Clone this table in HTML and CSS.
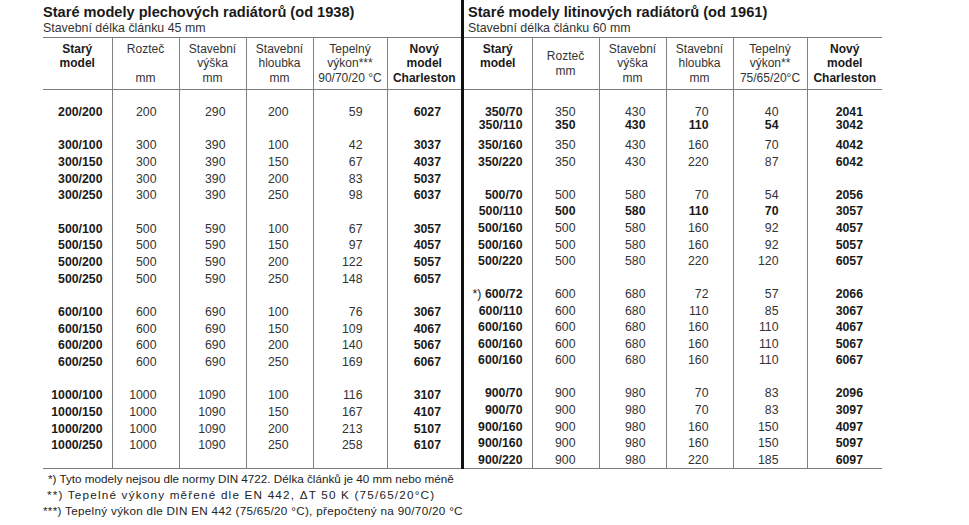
FILE: index.html
```html
<!DOCTYPE html>
<html lang="cs">
<head>
<meta charset="utf-8">
<title>Staré modely radiátorů</title>
<link rel="stylesheet" href="styles.css">
</head>
<body>
<div class="page">
  <div class="panels">
    <section class="panel panel-left">
      <h1 class="title">Staré modely plechových radiátorů (od 1938)</h1>
      <p class="subtitle">Stavební délka článku 45 mm</p>
      <table class="grid grid-left">
        <colgroup><col><col><col><col><col><col></colgroup>
        <thead>
          <tr>
            <th class="b">Starý<br>model</th>
            <th>Rozteč<br>&nbsp;<br>mm</th>
            <th>Stavební<br>výška<br>mm</th>
            <th>Stavební<br>hloubka<br>mm</th>
            <th>Tepelný<br>výkon***<br>90/70/20 °C</th>
            <th class="b">Nový<br>model<br>Charleston</th>
          </tr>
        </thead>
        <tbody>
          <tr class="pad"><td></td><td></td><td></td><td></td><td></td><td></td></tr>
          <tr><td>200/200</td><td>200</td><td>290</td><td>200</td><td>59</td><td>6027</td></tr>
          <tr><td></td><td></td><td></td><td></td><td></td><td></td></tr>
          <tr><td>300/100</td><td>300</td><td>390</td><td>100</td><td>42</td><td>3037</td></tr>
          <tr><td>300/150</td><td>300</td><td>390</td><td>150</td><td>67</td><td>4037</td></tr>
          <tr><td>300/200</td><td>300</td><td>390</td><td>200</td><td>83</td><td>5037</td></tr>
          <tr><td>300/250</td><td>300</td><td>390</td><td>250</td><td>98</td><td>6037</td></tr>
          <tr><td></td><td></td><td></td><td></td><td></td><td></td></tr>
          <tr><td>500/100</td><td>500</td><td>590</td><td>100</td><td>67</td><td>3057</td></tr>
          <tr><td>500/150</td><td>500</td><td>590</td><td>150</td><td>97</td><td>4057</td></tr>
          <tr><td>500/200</td><td>500</td><td>590</td><td>200</td><td>122</td><td>5057</td></tr>
          <tr><td>500/250</td><td>500</td><td>590</td><td>250</td><td>148</td><td>6057</td></tr>
          <tr><td></td><td></td><td></td><td></td><td></td><td></td></tr>
          <tr><td>600/100</td><td>600</td><td>690</td><td>100</td><td>76</td><td>3067</td></tr>
          <tr><td>600/150</td><td>600</td><td>690</td><td>150</td><td>109</td><td>4067</td></tr>
          <tr><td>600/200</td><td>600</td><td>690</td><td>200</td><td>140</td><td>5067</td></tr>
          <tr><td>600/250</td><td>600</td><td>690</td><td>250</td><td>169</td><td>6067</td></tr>
          <tr><td></td><td></td><td></td><td></td><td></td><td></td></tr>
          <tr><td>1000/100</td><td>1000</td><td>1090</td><td>100</td><td>116</td><td>3107</td></tr>
          <tr><td>1000/150</td><td>1000</td><td>1090</td><td>150</td><td>167</td><td>4107</td></tr>
          <tr><td>1000/200</td><td>1000</td><td>1090</td><td>200</td><td>213</td><td>5107</td></tr>
          <tr><td>1000/250</td><td>1000</td><td>1090</td><td>250</td><td>258</td><td>6107</td></tr>
          <tr class="pad"><td></td><td></td><td></td><td></td><td></td><td></td></tr>
        </tbody>
      </table>
    </section>
    <section class="panel panel-right">
      <h1 class="title">Staré modely litinových radiátorů (od 1961)</h1>
      <p class="subtitle">Stavební délka článku 60 mm</p>
      <table class="grid grid-right">
        <colgroup><col><col><col><col><col><col></colgroup>
        <thead>
          <tr>
            <th class="b">Starý<br>model</th>
            <th class="mid">Rozteč<br>mm</th>
            <th>Stavební<br>výška<br>mm</th>
            <th>Stavební<br>hloubka<br>mm</th>
            <th>Tepelný<br>výkon**<br>75/65/20°C</th>
            <th class="b">Nový<br>model<br>Charleston</th>
          </tr>
        </thead>
        <tbody>
          <tr class="pad"><td></td><td></td><td></td><td></td><td></td><td></td></tr>
          <tr class="pair">
            <td><span class="ln">350/70</span><span class="ln">350/110</span></td>
            <td><span class="ln">350</span><span class="ln strong">350</span></td>
            <td><span class="ln">430</span><span class="ln strong">430</span></td>
            <td><span class="ln">70</span><span class="ln strong">110</span></td>
            <td><span class="ln">40</span><span class="ln strong">54</span></td>
            <td><span class="ln">2041</span><span class="ln">3042</span></td>
          </tr>
          <tr><td>350/160</td><td>350</td><td>430</td><td>160</td><td>70</td><td>4042</td></tr>
          <tr><td>350/220</td><td>350</td><td>430</td><td>220</td><td>87</td><td>6042</td></tr>
          <tr><td></td><td></td><td></td><td></td><td></td><td></td></tr>
          <tr><td>500/70</td><td>500</td><td>580</td><td>70</td><td>54</td><td>2056</td></tr>
          <tr class="strong"><td>500/110</td><td>500</td><td>580</td><td>110</td><td>70</td><td>3057</td></tr>
          <tr><td>500/160</td><td>500</td><td>580</td><td>160</td><td>92</td><td>4057</td></tr>
          <tr><td>500/160</td><td>500</td><td>580</td><td>160</td><td>92</td><td>5057</td></tr>
          <tr><td>500/220</td><td>500</td><td>580</td><td>220</td><td>120</td><td>6057</td></tr>
          <tr><td></td><td></td><td></td><td></td><td></td><td></td></tr>
          <tr><td><span class="mark">*)</span> 600/72</td><td>600</td><td>680</td><td>72</td><td>57</td><td>2066</td></tr>
          <tr><td>600/110</td><td>600</td><td>680</td><td>110</td><td>85</td><td>3067</td></tr>
          <tr><td>600/160</td><td>600</td><td>680</td><td>160</td><td>110</td><td>4067</td></tr>
          <tr><td>600/160</td><td>600</td><td>680</td><td>160</td><td>110</td><td>5067</td></tr>
          <tr><td>600/160</td><td>600</td><td>680</td><td>160</td><td>110</td><td>6067</td></tr>
          <tr><td></td><td></td><td></td><td></td><td></td><td></td></tr>
          <tr><td>900/70</td><td>900</td><td>980</td><td>70</td><td>83</td><td>2096</td></tr>
          <tr><td>900/70</td><td>900</td><td>980</td><td>70</td><td>83</td><td>3097</td></tr>
          <tr><td>900/160</td><td>900</td><td>980</td><td>160</td><td>150</td><td>4097</td></tr>
          <tr><td>900/160</td><td>900</td><td>980</td><td>160</td><td>150</td><td>5097</td></tr>
          <tr><td>900/220</td><td>900</td><td>980</td><td>220</td><td>185</td><td>6097</td></tr>
        </tbody>
      </table>
    </section>
  </div>
  <div class="notes">
    <p class="note note-1">*) Tyto modely nejsou dle normy DIN 4722. Délka článků je 40 mm nebo méně</p>
    <p class="note note-2">**) Tepelné výkony měřené dle EN 442, ΔT 50 K (75/65/20°C)</p>
    <p class="note note-3">***) Tepelný výkon dle DIN EN 442 (75/65/20 °C), přepočtený na 90/70/20 °C</p>
  </div>
</div>
</body>
</html>
```

FILE: styles.css
```css
* { box-sizing: border-box; }
html, body { margin: 0; padding: 0; background: #fff; }
body {
  font-family: "Liberation Sans", Arial, Helvetica, sans-serif;
  color: #222;
}
.page {
  width: 969px;
  height: 525px;
  padding-left: 43px;
  overflow: hidden;
}
.panels { display: flex; align-items: stretch; }
.panel-left { width: 418px; }
.panel-right { width: 421px; border-left: 3px solid #111; }
.panel-right .title,
.panel-right .subtitle { padding-left: 4px; }

.title {
  margin: 4px 0 0;
  font-size: 14.6px;
  line-height: 17px;
  font-weight: bold;
  color: #1a1a1a;
  white-space: nowrap;
}
.subtitle {
  margin: 0 0 2px;
  font-size: 12.4px;
  line-height: 14px;
  color: #333;
  white-space: nowrap;
}

.grid {
  width: 418px;
  border-collapse: collapse;
  table-layout: fixed;
  border-top: 1px solid #7a7a7a;
  border-bottom: 1px solid #7a7a7a;
  font-size: 12.3px;
}
.grid thead tr { border-bottom: 1px solid #7a7a7a; }
.grid th {
  font-weight: normal;
  font-size: 12px;
  line-height: 14.5px;
  padding: 3.75px 0;
  vertical-align: top;
  text-align: center;
  color: #333;
  white-space: nowrap;
}
.grid th.b { font-weight: bold; color: #1a1a1a; }
.grid th.mid { vertical-align: middle; }
.grid th + th,
.grid td + td { border-left: 1px solid #808080; }

.grid td {
  height: 16.65px;
  line-height: 16.65px;
  padding: 0;
  text-align: right;
  color: #333;
  white-space: nowrap;
  vertical-align: top;
}
.grid td:first-child,
.grid td:last-child { font-weight: bold; color: #1a1a1a; }
.grid tr.pad td { height: 14.7px; line-height: 14.7px; }
.grid tr.strong td { font-weight: bold; color: #1a1a1a; }
.grid .strong { font-weight: bold; color: #1a1a1a; }
.grid .mark { font-weight: normal; }

.grid-right td { height: 16.55px; line-height: 16.55px; }
.grid-right tr.pair td { height: 33.1px; line-height: 12.7px; padding-top: 1.95px; }
.grid-right .ln { display: block; }

.grid-left col:nth-child(1) { width: 69px; }
.grid-left col:nth-child(2) { width: 67px; }
.grid-left col:nth-child(3) { width: 67px; }
.grid-left col:nth-child(4) { width: 67px; }
.grid-left col:nth-child(5) { width: 74px; }
.grid-left col:nth-child(6) { width: 74px; }

.grid-right col:nth-child(1) { width: 68px; }
.grid-right col:nth-child(2) { width: 67px; }
.grid-right col:nth-child(3) { width: 67px; }
.grid-right col:nth-child(4) { width: 67px; }
.grid-right col:nth-child(5) { width: 74px; }
.grid-right col:nth-child(6) { width: 75px; }

.grid-left td:nth-child(1) { padding-right: 9px; }
.grid-left td:nth-child(2) { padding-right: 22px; }
.grid-left td:nth-child(3) { padding-right: 20px; }
.grid-left td:nth-child(4) { padding-right: 24px; }
.grid-left td:nth-child(5) { padding-right: 24px; }
.grid-left td:nth-child(6) { padding-right: 20px; }

.grid-right td:nth-child(1) { padding-right: 9px; }
.grid-right td:nth-child(2) { padding-right: 23px; }
.grid-right td:nth-child(3) { padding-right: 20px; }
.grid-right td:nth-child(4) { padding-right: 24px; }
.grid-right td:nth-child(5) { padding-right: 28px; }
.grid-right td:nth-child(6) { padding-right: 19px; }

.notes { margin-top: 2px; }
.note {
  margin: 0;
  font-size: 11.7px;
  line-height: 16px;
  color: #222;
  white-space: nowrap;
}
.note-1 { padding-left: 5px; }
.note-2 { padding-left: 4px; letter-spacing: 1.2px; }
.note-3 { padding-left: 0; letter-spacing: 0.3px; }
```
